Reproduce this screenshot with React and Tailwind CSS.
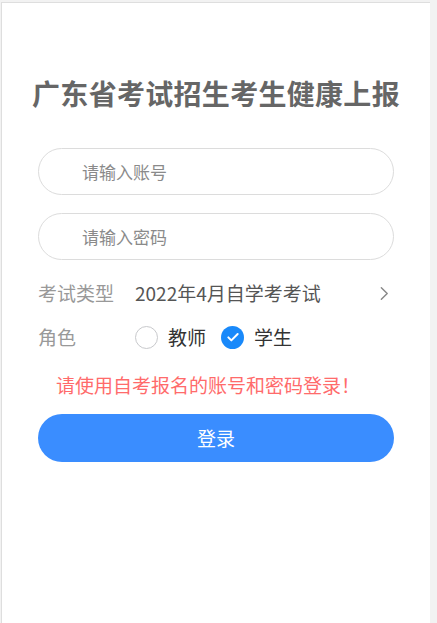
import React, { useState } from 'react';

const font = { fontFamily: '"Noto Sans CJK SC", "Noto Sans", sans-serif' };

function Radio({ checked, label, onClick }) {
  return (
    <button type="button" onClick={onClick} className="flex items-center">
      {checked ? (
        <span className="flex h-[23px] w-[23px] items-center justify-center rounded-full bg-[#1989fa]">
          <svg viewBox="0 0 24 24" className="h-[16px] w-[16px]" fill="none" stroke="#fff" strokeWidth="3" strokeLinecap="round" strokeLinejoin="round">
            <path d="M5 12.5l4.5 4.5L19 7.5" />
          </svg>
        </span>
      ) : (
        <span className="h-[23px] w-[23px] rounded-full border border-[#c8c9cc] bg-white" />
      )}
      <span className="ml-[10px] text-[19px] text-[#333]">{label}</span>
    </button>
  );
}

export default function App() {
  const [role, setRole] = useState('student');
  const [account, setAccount] = useState('');
  const [password, setPassword] = useState('');

  return (
    <div className="h-[623px] overflow-hidden bg-[#f2f2f2]" style={font}>
      <div className="ml-[1px] mt-[2px] h-[621px] w-[429px] border-l border-t border-[#dedede] bg-white">
        <h1 className="pt-[73px] text-center text-[28px] font-bold leading-[34px] tracking-[0.3px] text-[#666]">
          广东省考试招生考生健康上报
        </h1>

        <div className="mx-[36px] mt-[38px] flex flex-col gap-[18px]">
          <input
            value={account}
            onChange={(e) => setAccount(e.target.value)}
            placeholder="请输入账号"
            className="h-[47px] w-full rounded-full border border-[#dcdcdc] pl-[43px] text-[17px] text-[#333] outline-none placeholder:text-[#8a8a8a]"
          />
          <input
            type="password"
            value={password}
            onChange={(e) => setPassword(e.target.value)}
            placeholder="请输入密码"
            className="h-[47px] w-full rounded-full border border-[#dcdcdc] pl-[43px] text-[17px] text-[#333] outline-none placeholder:text-[#8a8a8a]"
          />
        </div>

        <div className="mx-[36px] mt-[10px] flex h-[46px] items-center">
          <span className="w-[97px] text-[19px] text-[#999]">考试类型</span>
          <span className="flex-1 text-[19px] text-[#555]">2022年4月自学考考试</span>
          <svg viewBox="0 0 10 16" className="mr-[5px] h-[15px] w-[9px]" fill="none" stroke="#888" strokeWidth="1.6" strokeLinecap="round" strokeLinejoin="round">
            <path d="M1.5 1.5L8 8l-6.5 6.5" />
          </svg>
        </div>

        <div className="mx-[36px] flex h-[42px] items-center">
          <span className="w-[97px] text-[19px] text-[#999]">角色</span>
          <div className="flex items-center gap-[15px]">
            <Radio checked={role === 'teacher'} label="教师" onClick={() => setRole('teacher')} />
            <Radio checked={role === 'student'} label="学生" onClick={() => setRole('student')} />
          </div>
        </div>

        <p className="ml-[54px] mt-[15px] text-[19px] leading-[24px] text-[#ff6b6b]">
          请使用自考报名的账号和密码登录！
        </p>

        <div className="mx-[36px] mt-[17px]">
          <button type="button" className="h-[48px] w-full rounded-full bg-[#3a8dff] text-[19px] text-white">
            登录
          </button>
        </div>
      </div>
    </div>
  );
}
